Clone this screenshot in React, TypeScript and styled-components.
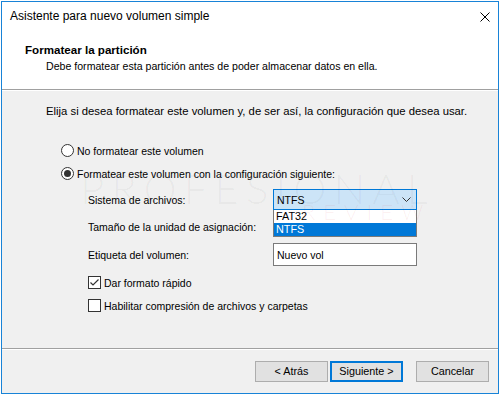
import React from "react";
import styled, { createGlobalStyle } from "styled-components";

const Global = createGlobalStyle`
  html, body { margin: 0; padding: 0; background: #ffffff; }
  body { font-family: "Liberation Sans", Arial, sans-serif; font-size: 10.5px; color: #000; }
  * { box-sizing: border-box; }
`;

const Window = styled.div`
  position: relative;
  margin: 1px 0 0 1px;
  width: 498px;
  height: 393px;
  border: 1px solid #1883d7;
  background: #f0f0f0;
  display: flex;
  flex-direction: column;
  overflow: hidden;
`;

const Top = styled.div`
  background: #ffffff;
  height: 88px;
  display: flex;
  flex-direction: column;
  border-bottom: 1px solid #a0a0a0;
  box-shadow: 0 1px 0 #ffffff;
`;

const TitleBar = styled.div`
  height: 29px;
  display: flex;
  align-items: center;
  justify-content: space-between;
  padding: 0 8px 0 8px;
`;

const Title = styled.span`
  font-size: 12px;
  line-height: 16px;
  margin-top: -1px;
`;

const CloseBtn = styled.span`
  width: 10px;
  height: 10px;
  display: flex;
`;

const Header = styled.div`
  display: flex;
  flex-direction: column;
  padding: 11px 0 0 23px;
`;

const Heading = styled.div`
  font-weight: bold;
  font-size: 11.6px;
  line-height: 16px;
`;

const SubHeading = styled.div`
  font-size: 10.6px;
  line-height: 16px;
  padding-left: 21px;
`;

const Body = styled.div`
  flex: 1;
  padding: 13px 0 0 44px;
  display: flex;
  flex-direction: column;
  position: relative;
`;

const Intro = styled.div`
  font-size: 11.3px;
  line-height: 16px;
`;

const RadioGroup = styled.div`
  margin-top: 20px;
  padding-left: 15px;
  display: flex;
  flex-direction: column;
`;

const RadioRow = styled.label`
  height: 23px;
  display: flex;
  align-items: center;
  gap: 3px;
  white-space: nowrap;
`;

const RadioCircle = styled.span<{ $checked?: boolean }>`
  width: 13px;
  height: 13px;
  flex: none;
  border-radius: 50%;
  border: 1px solid #333333;
  background: #ffffff;
  display: flex;
  align-items: center;
  justify-content: center;
  &::after {
    content: "";
    width: 7px;
    height: 7px;
    border-radius: 50%;
    background: ${(p) => (p.$checked ? "#333333" : "transparent")};
  }
`;

const Form = styled.div`
  margin-top: 4px;
  padding-left: 42px;
  display: grid;
  grid-template-columns: 185px 144px;
  row-gap: 6px;
  align-items: center;
`;

const FieldLabel = styled.div<{ $h: number }>`
  height: ${(p) => p.$h}px;
  display: flex;
  align-items: center;
  white-space: nowrap;
`;

const ComboWrap = styled.div`
  position: relative;
  height: 21px;
`;

const Combo = styled.div`
  height: 21px;
  background: #cce4f7;
  border: 1px solid #0078d7;
  display: flex;
  align-items: center;
  justify-content: space-between;
  padding: 0 5px 0 3px;
  font-size: 10.5px;
`;

const DropList = styled.div`
  position: absolute;
  top: 21px;
  left: 0;
  width: 144px;
  background: #ffffff;
  border: 1px solid #7a7a7a;
  border-top: none;
  z-index: 5;
  display: flex;
  flex-direction: column;
`;

const DropItem = styled.div<{ $selected?: boolean }>`
  height: 13px;
  line-height: 13px;
  padding-left: 2px;
  font-size: 10.8px;
  background: ${(p) => (p.$selected ? "#0078d7" : "#ffffff")};
  color: ${(p) => (p.$selected ? "#ffffff" : "#000000")};
`;

const TextBox = styled.div`
  height: 23px;
  background: #ffffff;
  border: 1px solid #7a7a7a;
  display: flex;
  align-items: center;
  padding-left: 3px;
`;

const Checks = styled.div`
  margin-top: 5px;
  padding-left: 42px;
  display: flex;
  flex-direction: column;
`;

const CheckRow = styled.label`
  height: 23px;
  display: flex;
  align-items: center;
  gap: 3px;
  white-space: nowrap;
`;

const CheckBox = styled.span`
  width: 13px;
  height: 13px;
  flex: none;
  border: 1px solid #333333;
  background: #ffffff;
  display: flex;
  align-items: center;
  justify-content: center;
`;

const Footer = styled.div`
  height: 45px;
  border-top: 1px solid #a0a0a0;
  box-shadow: inset 0 1px 0 #ffffff;
  display: flex;
  align-items: center;
  justify-content: flex-end;
  padding: 0 9px 0 0;
`;

const Button = styled.button<{ $primary?: boolean; $gap?: number }>`
  font-family: inherit;
  font-size: 10.8px;
  width: 73px;
  height: 21px;
  margin-left: ${(p) => p.$gap ?? 0}px;
  background: #e1e1e1;
  color: #000;
  border: ${(p) => (p.$primary ? "2px solid #0078d7" : "1px solid #adadad")};
  padding: 0;
  display: flex;
  align-items: center;
  justify-content: center;
`;

const Watermark = styled.div`
  position: absolute;
  left: 78px;
  top: 77px;
  pointer-events: none;
  display: flex;
  flex-direction: column;
  z-index: 10;
`;

const WmBig = styled.span`
  font-family: "Lato", "Noto Sans", sans-serif;
  font-weight: 300;
  font-size: 42px;
  letter-spacing: 7px;
  color: rgba(0, 0, 0, 0.04);
  line-height: 42px;
`;

const WmSmall = styled.span`
  font-family: "Lato", "Noto Sans", sans-serif;
  font-weight: 300;
  font-size: 22px;
  letter-spacing: 8px;
  color: rgba(210, 40, 40, 0.07);
  line-height: 20px;
  margin: -7px 0 0 222px;
`;

export default function App() {
  return (
    <>
      <Global />
      <Window>
        <Top>
          <TitleBar>
            <Title>Asistente para nuevo volumen simple</Title>
            <CloseBtn>
              <svg width="10" height="10" viewBox="0 0 10 10">
                <path d="M0.5 0.5 L9.5 9.5 M9.5 0.5 L0.5 9.5" stroke="#000" strokeWidth="1" />
              </svg>
            </CloseBtn>
          </TitleBar>
          <Header>
            <Heading>Formatear la partición</Heading>
            <SubHeading>Debe formatear esta partición antes de poder almacenar datos en ella.</SubHeading>
          </Header>
        </Top>
        <Body>
          <Intro>Elija si desea formatear este volumen y, de ser así, la configuración que desea usar.</Intro>
          <RadioGroup>
            <RadioRow>
              <RadioCircle />
              No formatear este volumen
            </RadioRow>
            <RadioRow>
              <RadioCircle $checked />
              Formatear este volumen con la configuración siguiente:
            </RadioRow>
          </RadioGroup>
          <Form>
            <FieldLabel $h={21}>Sistema de archivos:</FieldLabel>
            <ComboWrap>
              <Combo>
                <span>NTFS</span>
                <svg width="9" height="5" viewBox="0 0 9 5">
                  <path d="M0.5 0.5 L4.5 4.5 L8.5 0.5" fill="none" stroke="#333" strokeWidth="1" />
                </svg>
              </Combo>
              <DropList>
                <DropItem>FAT32</DropItem>
                <DropItem $selected>NTFS</DropItem>
              </DropList>
            </ComboWrap>
            <FieldLabel $h={21}>Tamaño de la unidad de asignación:</FieldLabel>
            <div />
            <FieldLabel $h={23}>Etiqueta del volumen:</FieldLabel>
            <TextBox>Nuevo vol</TextBox>
          </Form>
          <Checks>
            <CheckRow>
              <CheckBox>
                <svg width="11" height="11" viewBox="0 0 11 11">
                  <path d="M1.5 5.5 L4 8 L9.5 2.5" fill="none" stroke="#333" strokeWidth="1.2" />
                </svg>
              </CheckBox>
              Dar formato rápido
            </CheckRow>
            <CheckRow>
              <CheckBox />
              Habilitar compresión de archivos y carpetas
            </CheckRow>
          </Checks>
          <Watermark>
            <WmBig>PROFESIONAL</WmBig>
            <WmSmall>REVIEW</WmSmall>
          </Watermark>
        </Body>
        <Footer>
          <Button>&lt; Atrás</Button>
          <Button $primary $gap={2}>Siguiente &gt;</Button>
          <Button $gap={13}>Cancelar</Button>
        </Footer>
      </Window>
    </>
  );
}
